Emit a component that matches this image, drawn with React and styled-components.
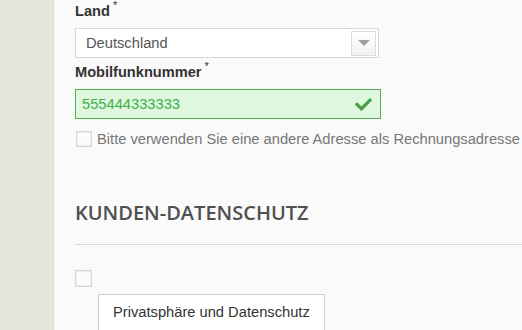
import React from "react";
import styled, { createGlobalStyle } from "styled-components";
import { FaCheck } from "react-icons/fa";

const Global = createGlobalStyle`
  html, body { margin: 0; padding: 0; }
  body { font-family: "Liberation Sans", Arial, sans-serif; background: #fafafa; }
  * { box-sizing: border-box; }
`;

const Page = styled.div`
  display: flex;
  width: 522px;
  height: 330px;
  overflow: hidden;
`;

const Sidebar = styled.div`
  width: 54px;
  flex: none;
  background: #e6e5de;
  border-right: 1px solid #dcdcd6;
`;

const Main = styled.div`
  flex: 1;
  min-width: 0;
  background: #fafafa;
  padding: 1px 0 0 21px;
  display: flex;
  flex-direction: column;
  & > * { flex-shrink: 0; }
`;

const Label = styled.label`
  display: block;
  font-size: 14.6px;
  line-height: 20px;
  font-weight: bold;
  color: #333;
  margin-top: ${(p) => p.$mt || 0}px;
  white-space: nowrap;
`;

const Req = styled.sup`
  font-size: 11px;
  font-weight: normal;
  margin-left: 3px;
  vertical-align: top;
  position: relative;
  top: -6px;
`;

const Select = styled.div`
  margin-top: 7px;
  width: 304px;
  height: 30px;
  background: #fff;
  border: 1px solid #d8d8d8;
  display: flex;
  align-items: center;
  justify-content: space-between;
  padding: 0 2px 0 10px;
  font-size: 14.7px;
  color: #555;
`;

const SelectBtn = styled.div`
  width: 25px;
  height: 25px;
  border: 1px solid #dcdcdc;
  background: linear-gradient(#fff, #f2f2f2);
  display: flex;
  align-items: center;
  justify-content: center;
  &::after {
    content: "";
    border-left: 6px solid transparent;
    border-right: 6px solid transparent;
    border-top: 6px solid #a0a0a0;
  }
`;

const Input = styled.div`
  margin-top: 7px;
  width: 306px;
  height: 30px;
  background: #dff7df;
  border: 1px solid #55b055;
  display: flex;
  align-items: center;
  justify-content: space-between;
  padding: 0 6px 0 6px;
  font-size: 14.7px;
  color: #3cb04a;
`;

const Ok = styled(FaCheck)`
  color: #46a046;
  width: 21px;
  height: 17px;
`;

const CheckRow = styled.div`
  display: flex;
  align-items: center;
  gap: 5px;
  margin-top: ${(p) => p.$mt || 0}px;
  font-size: 14.7px;
  line-height: 20px;
  color: #777;
  white-space: nowrap;
`;

const Box = styled.span`
  display: block;
  flex: none;
  width: ${(p) => p.$size}px;
  height: ${(p) => p.$size}px;
  background: #fbfbfb;
  border: 1px solid #d6d6d6;
  box-shadow: inset 0 0 0 1px #eeeeee;
  margin-left: ${(p) => p.$ml || 0}px;
  margin-top: ${(p) => p.$mt || 0}px;
`;

const Heading = styled.h2`
  margin: 51px 0 0;
  font-family: "Open Sans", sans-serif;
  font-weight: 600;
  font-size: 20px;
  line-height: 26px;
  color: #505050;
`;

const Rule = styled.hr`
  margin: 18px 0 0;
  border: 0;
  border-top: 1px solid #d8d8d8;
  height: 0;
`;

const Button = styled.button`
  margin: 7px 0 0 23px;
  align-self: flex-start;
  height: 40px;
  padding: 7px 14px 0 14px;
  background: #fff;
  border: 1px solid #cfcfcf;
  font-family: "Liberation Sans", Arial, sans-serif;
  font-size: 14.7px;
  line-height: 20px;
  color: #333;
  display: flex;
  align-items: flex-start;
`;

export default function App() {
  return (
    <>
      <Global />
      <Page>
        <Sidebar />
        <Main>
          <Label>
            Land<Req>*</Req>
          </Label>
          <Select>
            Deutschland
            <SelectBtn />
          </Select>
          <Label $mt={4}>
            Mobilfunknummer<Req>*</Req>
          </Label>
          <Input>
            555444333333
            <Ok />
          </Input>
          <CheckRow $mt={10}>
            <Box $size={16} $ml={1} />
            Bitte verwenden Sie eine andere Adresse als Rechnungsadresse
          </CheckRow>
          <Heading>KUNDEN-DATENSCHUTZ</Heading>
          <Rule />
          <Box $size={17} $mt={25} />
          <Button>Privatsphäre und Datenschutz</Button>
        </Main>
      </Page>
    </>
  );
}
